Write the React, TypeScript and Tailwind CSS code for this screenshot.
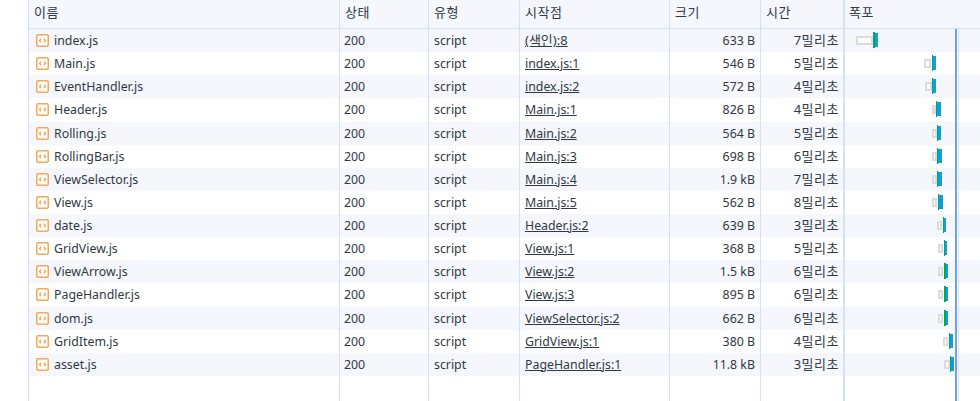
const FONT = 'font-["Noto_Sans","Noto_Sans_CJK_KR",sans-serif]'

const ROWS = [
  { name: 'index.js', from: '(색인):8', size: '633 B', time: '7밀리초', bar: [856, 873, 873, 875, 878] },
  { name: 'Main.js', from: 'index.js:1', size: '546 B', time: '5밀리초', bar: [924, 931, 932, 933, 936] },
  { name: 'EventHandler.js', from: 'index.js:2', size: '572 B', time: '4밀리초', bar: [925, 932, 932, 933, 936] },
  { name: 'Header.js', from: 'Main.js:1', size: '826 B', time: '4밀리초', bar: [932, 936, 936, 937, 941] },
  { name: 'Rolling.js', from: 'Main.js:2', size: '564 B', time: '5밀리초', bar: [932, 937, 937, 938, 941] },
  { name: 'RollingBar.js', from: 'Main.js:3', size: '698 B', time: '6밀리초', bar: [932, 937, 937, 938, 942] },
  { name: 'ViewSelector.js', from: 'Main.js:4', size: '1.9 kB', time: '7밀리초', bar: [932, 937, 937, 938, 942] },
  { name: 'View.js', from: 'Main.js:5', size: '562 B', time: '8밀리초', bar: [932, 937, 938, 939, 943] },
  { name: 'date.js', from: 'Header.js:2', size: '639 B', time: '3밀리초', bar: [937, 942, 943, 944, 946] },
  { name: 'GridView.js', from: 'View.js:1', size: '368 B', time: '5밀리초', bar: [938, 943, 944, 945, 947] },
  { name: 'ViewArrow.js', from: 'View.js:2', size: '1.5 kB', time: '6밀리초', bar: [938, 943, 944, 946, 948] },
  { name: 'PageHandler.js', from: 'View.js:3', size: '895 B', time: '6밀리초', bar: [938, 943, 944, 946, 948] },
  { name: 'dom.js', from: 'ViewSelector.js:2', size: '662 B', time: '6밀리초', bar: [938, 943, 944, 946, 948] },
  { name: 'GridItem.js', from: 'GridView.js:1', size: '380 B', time: '4밀리초', bar: [943, 948, 949, 950, 953] },
  { name: 'asset.js', from: 'PageHandler.js:1', size: '11.8 kB', time: '3밀리초', bar: [944, 950, 950, 951, 954] },
]

const COLS = 'grid grid-cols-[311px_89px_91px_150px_91px_84px_1fr]'
const CELL = 'border-r border-[#cfe1fb] px-[5px] overflow-hidden whitespace-nowrap'
const TIME_CELL = 'border-r-2 border-[#d3e3fb] pl-[5px] pr-[4px] overflow-hidden whitespace-nowrap'

function ScriptIcon() {
  return (
    <svg width="13" height="13" viewBox="0 0 13 13" className="shrink-0">
      <rect x="0.75" y="0.75" width="11.5" height="11.5" rx="1.2" fill="#fffaf3" stroke="#f2a95f" strokeWidth="1.5" />
      <path d="M5 4.9 3.5 6.5 5 8.1M8 4.9 9.5 6.5 8 8.1" fill="none" stroke="#ee9a3e" strokeWidth="1.1" />
    </svg>
  )
}

function Waterfall({ bar }: { bar: number[] }) {
  const [g0, g1, s0, s1, e] = bar
  const origin = 845
  return (
    <>
      <div
        className="absolute top-[7px] h-[9px] border-2 border-[#dcdcdc] bg-white"
        style={{ left: g0 - origin, width: g1 - g0 }}
      />
      <div
        className="absolute top-[3px] h-[16px] bg-[#0ca44f]"
        style={{ left: s0 - origin, width: s1 - s0 }}
      />
      <div
        className="absolute top-[4px] h-[14px] bg-[#0a9fe8]"
        style={{ left: s1 - origin, width: e - s1 }}
      />
    </>
  )
}

export default function App() {
  return (
    <div className={`${FONT} relative h-[401px] w-[980px] overflow-hidden bg-white pl-[28px] text-[12.35px] leading-[23px] text-[#303942]`}>
      <div className="flex h-full flex-col border-l border-[#cfe1fb]">
        {/* Header */}
        <div className={`${COLS} h-[29px] shrink-0 border-b border-[#cfe1fb] bg-[#f5f7fd] text-[13px] leading-[25px] tracking-[0.6px]`}>
          {['이름', '상태', '유형', '시작점', '크기', '시간'].map(h => (
            <div key={h} className={h === '시간' ? TIME_CELL : CELL}>{h}</div>
          ))}
          <div className="px-[4px]">폭포</div>
        </div>

        {/* Rows */}
        {ROWS.map((r, i) => (
          <div key={r.name} className={`${COLS} h-[23.14px] shrink-0 ${i % 2 === 0 ? 'bg-[#f5f7fd]' : 'bg-white'}`}>
            <div className={`${CELL} flex items-center gap-[5px] pl-[7px]`}>
              <ScriptIcon />
              <span>{r.name}</span>
            </div>
            <div className={`${CELL} pl-[4px]`}>200</div>
            <div className={CELL}>script</div>
            <div className={CELL}>
              <span className="underline">
                {r.from.startsWith('(') ? <span className="text-[13px]">{r.from}</span> : r.from}
              </span>
            </div>
            <div className={`${CELL} text-right`}>{r.size}</div>
            <div className={`${TIME_CELL} text-right text-[13px] tracking-[0.5px]`}>{r.time}</div>
            <div className="relative"><Waterfall bar={r.bar} /></div>
          </div>
        ))}

        {/* Empty area keeps the column lines going */}
        <div className={`${COLS} flex-1`}>
          {[0, 1, 2, 3, 4].map(c => <div key={c} className={CELL} />)}
          <div className={TIME_CELL} />
        </div>
      </div>

      {/* Load marker lines over the waterfall */}
      <div className="absolute bottom-0 left-[955px] top-[29px] w-[2px] bg-[#6fa3e0]" />
      <div className="absolute bottom-0 left-[958px] top-[29px] w-[1px] bg-[#d6e4fa]" />
    </div>
  )
}
